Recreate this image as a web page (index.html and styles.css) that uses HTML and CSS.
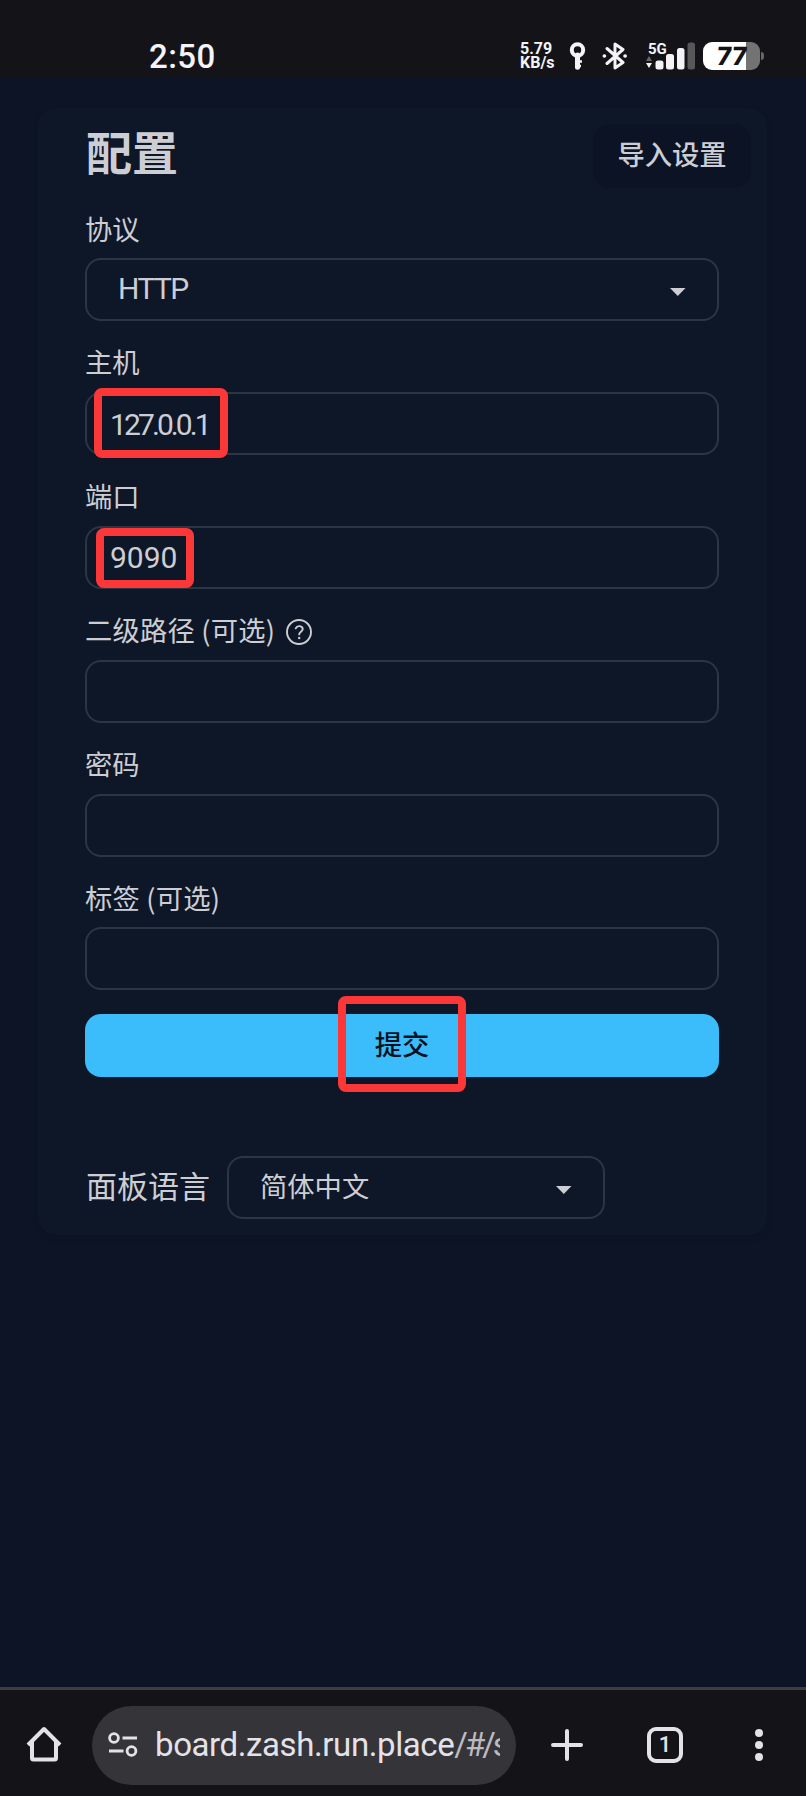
FILE: index.html
```html
<!DOCTYPE html>
<html lang="zh-CN">
<head>
<meta charset="utf-8">
<title>配置</title>
<link rel="stylesheet" href="styles.css">
</head>
<body>
<header class="status">
  <div class="clock">2:50</div>
  <div class="indicators">
    <div class="speed"><span>5.79</span><span>KB/s</span></div>
    <svg class="key" width="18" height="28" viewBox="0 0 18 28" fill="none" stroke="#f4f4f6"><circle cx="8.5" cy="8" r="5.7" stroke-width="4"/><path d="M8.5 13v12.3" stroke-width="5" stroke-linecap="round"/><path d="M9 19.5h4M9 24h3" stroke-width="2.5"/></svg>
    <svg class="bluetooth" width="26" height="28" viewBox="0 0 26 28" fill="none" stroke="#f4f4f6" stroke-width="3" stroke-linejoin="round" stroke-linecap="round"><path d="M5 6.500L21 20.500l-8 5.500V2l8 5.500L5 21.500"/><path d="M2.300 14h.2M23 14h.2" stroke-width="3.600"/></svg>
    <div class="signal">
      <svg width="50" height="28" viewBox="0 0 50 28"><path d="M0 19l3-5 3 5z" fill="#66666a"/><path d="M0 21h6l-3 5z" fill="#f4f4f6"/><g fill="#f4f4f6"><rect x="9.500" y="18.500" width="8" height="9" rx="2.500"/><rect x="20" y="12" width="8" height="15.500" rx="2.500"/><rect x="31" y="6" width="7.500" height="21.500" rx="2.500"/></g><rect x="41.500" y="0.500" width="7.500" height="27" rx="2.500" fill="#58585b"/></svg>
      <span class="network">5G</span>
    </div>
    <div class="battery"><span class="battery-level">77</span></div>
    <div class="battery-tip"></div>
  </div>
</header>

<main class="page">
  <section class="card">
    <div class="card-head">
      <h1 class="title">配置</h1>
      <button class="import">导入设置</button>
    </div>
    <form class="form">
      <label class="label">协议</label>
      <div class="field select"><span class="latin http">HTTP</span><svg width="16" height="8" viewBox="0 0 16 8"><path d="M0 0h15.500L7.750 8z" fill="#cdced4"/></svg></div>
      <label class="label">主机</label>
      <div class="field"><span class="latin host">127.0.0.1</span><i class="mark mark-host"></i></div>
      <label class="label">端口</label>
      <div class="field"><span class="latin port">9090</span><i class="mark mark-port"></i></div>
      <label class="label"><span class="optional">二级路径 (可选)</span>
        <svg class="help" width="26" height="26" viewBox="0 0 26 26" fill="none" stroke="#cdced4" stroke-width="1.900" stroke-linecap="round"><circle cx="13" cy="13" r="12"/><path d="M9.700 9.300c1.600-3.400 7-2.600 7 .8 0 2.600-3.500 2.700-3.500 5.300"/><path d="M13.200 19v.2" stroke-width="2.300"/></svg>
      </label>
      <div class="field"></div>
      <label class="label">密码</label>
      <div class="field"></div>
      <label class="label"><span class="optional">标签 (可选)</span></label>
      <div class="field"></div>
      <div class="submit">提交<i class="mark mark-submit"></i></div>
    </form>
    <div class="language">
      <span class="language-label">面板语言</span>
      <div class="field select language-select"><span>简体中文</span><svg width="16" height="8" viewBox="0 0 16 8"><path d="M0 0h15.500L7.750 8z" fill="#cdced4"/></svg></div>
    </div>
  </section>
</main>

<footer class="browser">
  <svg class="home" width="36" height="36" viewBox="0 0 36 36" fill="none" stroke="#e4e2e9" stroke-width="4" stroke-linejoin="round"><path d="M2 19L18 3l16 16" /><path d="M6 15.500V32q0 1.500 1.500 1.500h21q1.500 0 1.500-1.500V15.500"/></svg>
  <div class="address">
    <svg class="tune" width="30" height="26" viewBox="0 0 30 26" fill="none" stroke="#e4e2e9" stroke-width="2.800"><circle cx="6" cy="6" r="4.400"/><path d="M14.500 6H29M1 19h14.500"/><circle cx="23.500" cy="19" r="4.400"/></svg>
    <div class="url">board.zash.run.place<span class="path">/#/s</span></div>
  </div>
  <svg class="plus" width="32" height="32" viewBox="0 0 32 32" stroke="#e4e2e9" stroke-width="4" stroke-linecap="round"><path d="M16 2v28M2 16h28"/></svg>
  <div class="tabs">1</div>
  <svg class="more" width="8" height="32" viewBox="0 0 8 32" fill="#e4e2e9"><circle cx="4" cy="4" r="4"/><circle cx="4" cy="16" r="4"/><circle cx="4" cy="28" r="4"/></svg>
</footer>
</body>
</html>
```
FILE: styles.css
```css
* { box-sizing: border-box; }
html, body { margin: 0; height: 1796px; }
body {
  display: flex;
  flex-direction: column;
  overflow: hidden;
  background: #0c1426;
  color: #cdced4;
  font-family: Roboto, "Noto Sans CJK SC", sans-serif;
}
.status {
  display: flex;
  justify-content: space-between;
  height: 77px;
  flex: none;
  padding: 0 42px 0 149px;
  background: #131318;
  color: #f4f4f6;
}
.clock { padding-top: 37px; font-size: 33px; font-weight: 500; line-height: 40px; letter-spacing: .4px; }
.indicators { display: flex; padding-top: 42px; height: 70px; }
.speed { display: flex; flex-direction: column; width: 49px; font-size: 16px; font-weight: 700; line-height: 14px; }
.key { margin-right: 15px; }
.bluetooth { margin-right: 18px; }
.signal { position: relative; width: 57px; }
.network { position: absolute; left: 2px; top: 0; font-size: 15px; font-weight: 700; line-height: 15px; }
.battery {
  width: 57px;
  height: 28px;
  border-radius: 9px;
  background: linear-gradient(90deg, #fff 43px, #737373 43px);
  color: #131318;
  text-align: center;
}
.battery-level { display: inline-block; font: 800 25px/28px Inter, sans-serif; transform: skewX(-5deg); }
.battery-tip { width: 3px; height: 8px; margin: 10px 0 0 1px; border-radius: 0 4px 4px 0; background: #666; }

.page { flex: 1; padding: 31px 39px 0 38px; }
.card {
  height: 1127px;
  border-radius: 18px;
  background: #0e1728;
  box-shadow: 0 3px 6px rgba(0, 0, 0, .08);
}
.card-head { display: flex; justify-content: space-between; height: 94px; padding: 16px 16px 0 48px; }
.title { margin: 0; font-size: 46px; font-weight: 700; line-height: 60px; }
.import {
  width: 158px;
  height: 64px;
  padding: 0 0 7px;
  border: 0;
  border-radius: 16px;
  background: #0c1324;
  color: inherit;
  font: 500 27.300px/40px "Noto Sans CJK SC", sans-serif;
  white-space: nowrap;
}
.form { display: flex; flex-direction: column; padding: 0 48px 0 47px; }
.label {
  display: flex;
  align-items: center;
  height: 56.200px;
  padding: 0 0 5px;
  font: 27.300px/40px "Noto Sans CJK SC", sans-serif;
}
.optional { letter-spacing: .2px; }
.form .field { margin-bottom: 14.650px; }
.help { margin: 6px 0 0 11px; }
.field {
  position: relative;
  display: flex;
  align-items: center;
  height: 63px;
  padding: 2px 23px 0;
  border: 2px solid #2b3545;
  border-radius: 16px;
}
.select { justify-content: space-between; padding: 0 31px 3px; }
.select svg { margin-top: 8px; }
.latin { font-size: 30px; line-height: 40px; }
.http { padding-top: 2px; letter-spacing: -1.600px; }
.host { letter-spacing: -2.900px; }
.mark { position: absolute; border: 8px solid #fb3837; border-radius: 8px; }
.mark-host { left: 7px; top: -6px; width: 134px; height: 70px; }
.mark-port { left: 9px; top: 0; width: 98px; height: 60px; }
.mark-submit { left: 253px; top: -18px; width: 128px; height: 96px; }
.submit {
  position: relative;
  display: flex;
  align-items: center;
  justify-content: center;
  height: 63.500px;
  margin-top: 8.700px;
  padding-bottom: 5px;
  border-radius: 16px;
  background: #3cbdfb;
  color: #06131e;
  font: 500 27.300px/40px "Noto Sans CJK SC", sans-serif;
}
.language { display: flex; align-items: center; padding: 79px 0 0 48px; }
.language-label { width: 141px; padding-bottom: 6px; font: 31px/44px "Noto Sans CJK SC", sans-serif; }
.language-select { width: 378px; padding-bottom: 6px; font: 27.300px/40px "Noto Sans CJK SC", sans-serif; }
.language-select svg { margin-top: 10px; }

.browser {
  display: flex;
  align-items: center;
  flex: none;
  height: 109px;
  padding: 3px 0 0 26px;
  border-top: 3px solid #3d3c41;
  background: #131318;
  color: #e4e2e9;
}
.home { margin: 0 30px 2px 0; }
.address {
  display: flex;
  align-items: center;
  width: 424px;
  height: 79px;
  margin-bottom: -1px;
  padding-left: 16px;
  border-radius: 40px;
  background: #353439;
}
.tune { margin-right: 17px; }
.url { width: 345px; overflow: hidden; font-size: 33px; line-height: 44px; letter-spacing: -.400px; white-space: nowrap; }
.path { color: #bdbbc2; letter-spacing: -3px; }
.plus { margin-left: 35px; }
.tabs {
  width: 36px;
  height: 36px;
  margin-left: 64px;
  border: 4px solid #e4e2e9;
  border-radius: 9px;
  font: 500 22px/28px Roboto, sans-serif;
  text-align: center;
}
.more { margin-left: 72px; }
```
